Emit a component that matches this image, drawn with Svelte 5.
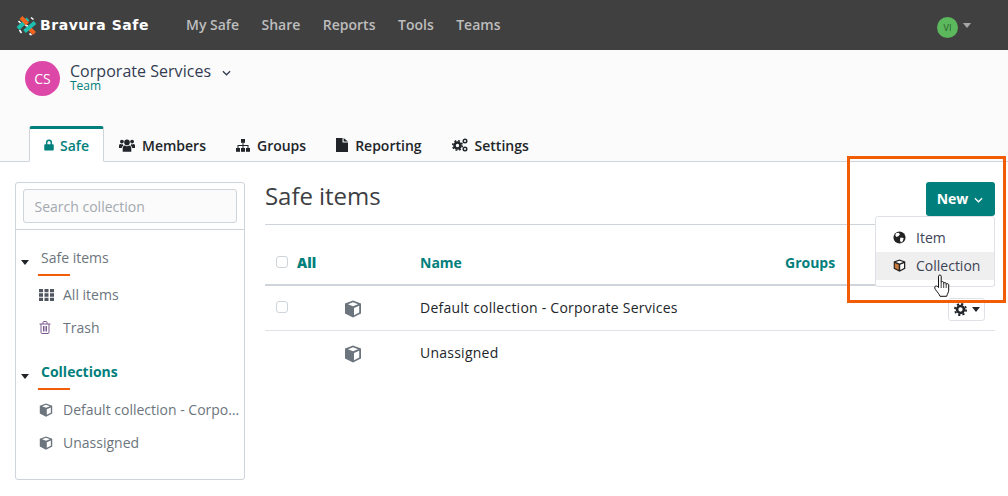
<script>
  const navItems = ['My Safe', 'Share', 'Reports', 'Tools', 'Teams'];
</script>

{#snippet cube(cls)}
  <svg class={cls} viewBox="0 0 18 18" aria-hidden="true">
    <path fill="currentColor" d="M9 .6 17 3.6V13.600L9 17.600 1 13.600V3.600Z"/>
    <path fill="#fff" d="M9 2.300 14 4.200 9 6.200 4 4.200ZM10 7.900 15.200 5.800V12.600L10 15.200Z"/>
  </svg>
{/snippet}

{#snippet caret(cls)}
  <svg class={cls} viewBox="0 0 10 6" aria-hidden="true"><path fill="currentColor" d="M0 0H10L5 6Z"/></svg>
{/snippet}

{#snippet chevron(cls)}
  <svg class={cls} viewBox="0 0 10 6" aria-hidden="true"><path fill="none" stroke="currentColor" stroke-width="1.400" d="M1 1 5 5 9 1"/></svg>
{/snippet}

<div class="page">
  <header class="nav">
    <div class="brand">
      <svg class="logo" viewBox="0 0 21 21" aria-hidden="true">
        <g fill="none" stroke="#fff" stroke-width="1.600">
          <path d="M2.500 6 4.500 8M15 2.500 17.500 4.500M3.500 15 5.500 18M13.500 18.500 15.500 20M9 9.500 12 11.500"/>
        </g>
        <g fill="none" stroke-width="4">
          <path stroke="#1fbfb0" d="M2 13.500 12 4"/>
          <path stroke="#f2641e" d="M5 2.500 11.500 9"/>
          <path stroke="#f2641e" d="M12 12 18.500 18.500"/>
          <path stroke="#1fbfb0" d="M8.500 16.500 19 7.500"/>
        </g>
      </svg>
      <span class="brand-name">Bravura Safe</span>
    </div>
    <nav class="nav-links">
      {#each navItems as item}<a href="#top">{item}</a>{/each}
    </nav>
    <div class="user">
      <span class="avatar">VI</span>
      {@render caret('user-caret')}
    </div>
  </header>

  <section class="subhead">
    <div class="org">
      <span class="org-badge">CS</span>
      <div class="org-text">
        <div class="org-name">Corporate Services {@render chevron('org-chev')}</div>
        <div class="org-type">Team</div>
      </div>
    </div>
    <div class="tabs">
      <a class="tab active" href="#top">
        <svg class="ti lock" viewBox="0 0 12 14"><path fill="currentColor" d="M2.300 6V4.200a3.700 3.700 0 0 1 7.400 0V6h.8c.8 0 1.200.5 1.200 1.200v5.300c0 .8-.5 1.200-1.200 1.200h-9C.7 13.700.3 13.200.3 12.500V7.200C.3 6.500.7 6 1.500 6ZM4.100 6h3.800V4.200a1.900 1.900 0 0 0-3.800 0Z"/></svg>
        Safe
      </a>
      <a class="tab" href="#top">
        <svg class="ti users" viewBox="0 0 16 13"><g fill="currentColor"><circle cx="8" cy="3.400" r="2.800"/><circle cx="2.900" cy="2.600" r="1.900"/><circle cx="13.100" cy="2.600" r="1.900"/><path d="M3.700 12.800V9.300C3.700 7.500 4.800 6.500 6 6.500c.6.500 1.200.8 2 .8s1.400-.3 2-.8c1.200 0 2.300 1 2.300 2.800v3.500ZM0 9V6.600c0-1 .7-1.700 1.500-1.700.4.300.9.500 1.500.500.400 0 .700 0 1-.1-.1.500.1 1 .5 1.300-1 .6-1.600 1.400-1.700 2.400ZM16 9V6.600c0-1-.7-1.700-1.500-1.700-.4.300-.9.500-1.500.500-.4 0-.7 0-1-.1.100.5-.1 1-.5 1.300 1 .6 1.600 1.400 1.700 2.400Z"/></g></svg>
        Members
      </a>
      <a class="tab" href="#top">
        <svg class="ti sitemap" viewBox="0 0 14 13"><g fill="currentColor"><rect x="5" y="0" width="4" height="3.800"/><rect x="0" y="9" width="4" height="3.800"/><rect x="5" y="9" width="4" height="3.800"/><rect x="10" y="9" width="4" height="3.800"/><path d="M6.500 3.500h1V6H12.500V9h-1V7H7.500V9h-1V7H2.500V9h-1V6H6.500Z"/></g></svg>
        Groups
      </a>
      <a class="tab" href="#top">
        <svg class="ti file" viewBox="0 0 11 14" preserveAspectRatio="none"><path fill="currentColor" d="M0 0H6V4.500H11V14H0ZM7 0 11 3.500H7Z"/></svg>
        Reporting
      </a>
      <a class="tab" href="#top">
        <svg class="ti cogs" viewBox="0 0 16 14"><g fill="none" stroke="currentColor"><circle cx="5.500" cy="7.500" r="3" stroke-width="2.600"/><circle cx="5.500" cy="7.500" r="4.800" stroke-width="1.600" stroke-dasharray="1.880 1.890"/><circle cx="13" cy="3" r="1.800" stroke-width="1.400"/><circle cx="13" cy="11" r="1.800" stroke-width="1.400"/></g></svg>
        Settings
      </a>
    </div>
  </section>

  <main class="content">
    <aside class="side">
      <div class="search-wrap">
        <input class="search" placeholder="Search collection" />
      </div>
      <div class="tree">
        <div class="tree-head">
          {@render caret('tree-caret')}
          <span class="tree-title">Safe items</span>
        </div>
        <a class="tree-item" href="#top">
          <svg class="tree-ic" viewBox="0 0 15 12"><path fill="currentColor" d="M0 0h4v3.300H0ZM5.500 0h4v3.300h-4ZM11 0h4v3.300h-4ZM0 4.350h4v3.300H0ZM5.500 4.350h4v3.300h-4ZM11 4.350h4v3.300h-4ZM0 8.700h4V12H0ZM5.500 8.700h4V12h-4ZM11 8.700h4V12h-4Z"/></svg>
          All items
        </a>
        <a class="tree-item" href="#top">
          <svg class="tree-ic trash" viewBox="0 0 12 13"><path fill="none" stroke="currentColor" stroke-width="1" d="M.5 3h11M2 3V11.500c0 .6.300 1 1 1H9c.7 0 1-.4 1-1V3M4 3V1.500c0-.6.300-1 1-1H7c.7 0 1 .4 1 1V3M4.500 5v5.500M6 5v5.500M7.500 5v5.500"/></svg>
          Trash
        </a>
        <div class="tree-head second">
          {@render caret('tree-caret')}
          <span class="tree-title current">Collections</span>
        </div>
        <a class="tree-item" href="#top">
          {@render cube('tree-cube')}
          <span class="ellipsis">Default collection - Corporate Services</span>
        </a>
        <a class="tree-item" href="#top">
          {@render cube('tree-cube')}
          Unassigned
        </a>
      </div>
    </aside>

    <div class="main">
      <div class="title-row">
        <h1>Safe items</h1>
        <button class="new"><span class="new-label">New</span> {@render chevron('new-chev')}</button>
      </div>
      <div class="table">
        <div class="row head">
          <span class="c-check"><i class="check"></i><b>All</b></span>
          <span class="c-name">Name</span>
          <span class="c-groups">Groups</span>
        </div>
        <div class="row">
          <span class="c-check"><i class="check"></i></span>
          <span class="c-icon">{@render cube('row-cube')}</span>
          <span class="c-name body">Default collection - Corporate Services</span>
          <button class="gear">
            <svg class="gear-ic" viewBox="0 0 14 14"><circle cx="7" cy="7" r="3.700" fill="none" stroke="currentColor" stroke-width="2.800"/><circle cx="7" cy="7" r="6" fill="none" stroke="currentColor" stroke-width="2" stroke-dasharray="2.350 2.360"/></svg>
            {@render caret('gear-caret')}
          </button>
        </div>
        <div class="row last">
          <span class="c-check"></span>
          <span class="c-icon">{@render cube('row-cube')}</span>
          <span class="c-name body">Unassigned</span>
        </div>
      </div>
    </div>
  </main>

  <div class="menu">
    <a class="menu-item" href="#top">
      <svg class="menu-ic" viewBox="0 0 14 14"><circle cx="7" cy="7" r="6.500" fill="currentColor"/><path fill="#fff" d="M3 2.500 6 1.800 7.500 3.500 6 5.500 4 6.500 2.500 5ZM8 7l3.500.5-1 3.500-2 1.500-1-2.500Z"/></svg>
      Item
    </a>
    <a class="menu-item hover" href="#top">
      <svg class="menu-ic" viewBox="0 0 18 18"><path fill="#222" d="M9 .6 17 3.600V13.600L9 17.600 1 13.600V3.600Z"/><path fill="#fff" d="M9 2.300 14 4.200 9 6.200 4 4.200ZM10 7.900 15.200 5.800V12.600L10 15.200Z"/><path fill="#c9793a" d="M2.500 5.500 8 7.800V15.300L2.500 12.600Z"/></svg>
      Collection
    </a>
  </div>

  <svg class="hand" viewBox="0 0 17 24" aria-hidden="true">
    <path fill="#fff" stroke="#111" stroke-width="1" stroke-linejoin="round" d="M4.500 13V2.200C4.500.6 7.200.6 7.200 2.200V8.500c0-1.300 2.500-1.300 2.500.2v.8c0-1.300 2.500-1.300 2.500.2v.8c0-1.200 2.500-1.200 2.500.4v5.200c0 2.500-1.500 3.400-2 6.200H6C5.300 20 3.500 18.500 1.400 15.500.2 13.700.7 12 2 12c1 0 1.800 .6 2.500 1.500Z"/>
    <path fill="none" stroke="#111" stroke-width=".8" d="M7.200 9V14M9.700 9.500V14M12.200 10.500V14"/>
  </svg>

  <div class="highlight"></div>
</div>

<style>
  :global(body) {
    margin: 0;
    background: #fff;
  }
  .page {
    position: relative;
    width: 1008px;
    height: 496px;
    overflow: hidden;
    font-family: "Open Sans", sans-serif;
    font-size: 14px;
    color: #212529;
  }
  a {
    color: inherit;
    text-decoration: none;
  }

  .nav {
    height: 50px;
    background: #404040;
    display: flex;
    align-items: center;
    padding-left: 15px;
    box-sizing: border-box;
  }
  .brand {
    display: flex;
    align-items: center;
    width: 171px;
  }
  .logo {
    width: 21px;
    height: 21px;
    margin-left: 1px;
    flex: none;
  }
  .brand-name {
    font-family: "DejaVu Sans", sans-serif;
    font-weight: 700;
    font-size: 14px;
    color: #fff;
    margin-left: 3px;
    letter-spacing: 0.55px;
    white-space: nowrap;
  }
  .nav-links {
    display: flex;
    gap: 22.500px;
    font-weight: 600;
    font-size: 14px;
    color: #bdbdbd;
    margin-top: -2px;
  }
  .user {
    margin-left: auto;
    margin-right: 36px;
    margin-top: 4px;
    display: flex;
    align-items: center;
    gap: 4px;
  }
  .avatar {
    width: 21px;
    height: 21px;
    border-radius: 50%;
    background: #5cb85c;
    color: #2c5e2c;
    font-size: 9px;
    display: flex;
    align-items: center;
    justify-content: center;
  }
  .user-caret {
    width: 10px;
    height: 5px;
    margin-top: -4px;
    color: #a5a5a5;
  }

  .subhead {
    height: 112px;
    background: #fbfbfb;
    border-bottom: 1px solid #ced4da;
    box-sizing: border-box;
    display: flex;
    flex-direction: column;
    justify-content: space-between;
    padding: 11px 0 0 25px;
  }
  .org {
    display: flex;
    gap: 10px;
  }
  .org-badge {
    width: 35px;
    height: 35px;
    border-radius: 50%;
    background: #dc47a8;
    color: #fff;
    font-size: 14px;
    display: flex;
    align-items: center;
    justify-content: center;
    flex: none;
  }
  .org-name {
    font-size: 16px;
    line-height: 20px;
    letter-spacing: 0.03px;
    color: #333c52;
  }
  .org-chev {
    width: 9px;
    height: 6px;
    margin-left: 7px;
    vertical-align: 1px;
  }
  .org-type {
    font-size: 12px;
    line-height: 12px;
    margin-top: -1px;
    color: #017f7c;
  }
  .tabs {
    display: flex;
    margin-left: 4px;
    margin-bottom: -1px;
    align-items: flex-end;
  }
  .tab {
    display: flex;
    align-items: center;
    height: 34px;
    box-sizing: border-box;
    padding: 0 15px;
    font-weight: 600;
    font-size: 14px;
    color: #212529;
    gap: 7px;
  }
  .tab.active {
    height: 36px;
    width: 75px;
    color: #017f7c;
    background: #fff;
    border: 1px solid #ced4da;
    border-top: 3px solid #017f7c;
    border-bottom: 1px solid #fff;
    border-radius: 3px 3px 0 0;
    padding: 0 0 0 14px;
    gap: 6px;
  }
  .ti { flex: none; }
  .lock { width: 10px; height: 12px; }
  .users { width: 16px; height: 13px; }
  .sitemap { width: 14px; height: 13px; }
  .file { width: 12px; height: 14px; }
  .cogs { width: 16px; height: 14px; }

  .content {
    display: flex;
    padding: 20px 13px 0 15px;
    gap: 20px;
  }
  .side {
    width: 230px;
    height: 298px;
    box-sizing: border-box;
    border: 1px solid #ced4da;
    border-radius: 3px;
    flex: none;
  }
  .search-wrap {
    padding: 6px 7px;
    border-bottom: 1px solid #ced4da;
  }
  .search {
    display: block;
    width: 100%;
    height: 34px;
    box-sizing: border-box;
    background: #fbfbfb;
    border: 1px solid #ced4da;
    border-radius: 3px;
    padding: 0 10.500px;
    font: 14px "Open Sans", sans-serif;
    outline: none;
  }
  .search::placeholder {
    color: #a4a9b0;
    opacity: 1;
  }
  .tree {
    padding-top: 18px;
    color: #6c757d;
  }
  .tree-head {
    position: relative;
    height: 28px;
    padding-left: 22px;
    display: flex;
    align-items: flex-start;
    margin-bottom: 2px;
  }
  .tree-head.second {
    margin-top: 18px;
    margin-bottom: 3px;
  }
  .tree-caret {
    position: absolute;
    left: 5px;
    top: 12px;
    width: 8px;
    height: 5px;
    color: #212529;
  }
  .tree-title {
    display: block;
    line-height: 20px;
    padding-left: 3px;
    width: 29px;
    height: 26px;
    border-bottom: 2px solid #f25c05;
    white-space: nowrap;
    box-sizing: content-box;
  }
  .tree-title.current {
    font-weight: 700;
    color: #017f7c;
  }
  .tree-item {
    display: flex;
    align-items: center;
    height: 33px;
    padding-left: 23px;
    gap: 9px;
    white-space: nowrap;
    color: #6c757d;
  }
  .tree-ic {
    width: 15px;
    height: 12px;
    color: #4f5660;
    flex: none;
  }
  .tree-ic.trash {
    color: #7d5a8c;
    height: 13px;
    width: 12px;
    margin: 0 3px 0 0;
  }
  .tree-cube {
    width: 14px;
    height: 14px;
    color: #6c757d;
    flex: none;
    margin-right: 1px;
  }
  .ellipsis {
    overflow: hidden;
    text-overflow: ellipsis;
    min-width: 0;
    margin-right: 4px;
  }

  .main {
    flex: 1;
    min-width: 0;
  }
  .title-row {
    height: 42px;
    display: flex;
    justify-content: space-between;
    align-items: flex-start;
    border-bottom: 1px solid #ced4da;
  }
  h1 {
    margin: -1px 0 0;
    font-size: 24px;
    font-weight: 400;
    line-height: 30px;
    letter-spacing: -0.05px;
    color: #3c4043;
  }
  .new {
    width: 69px;
    height: 34px;
    border: none;
    border-radius: 3px;
    background: #017f7c;
    color: #fff;
    font: 700 14px "Open Sans", sans-serif;
    display: flex;
    align-items: center;
    justify-content: center;
    gap: 6px;
    padding: 0 1px 2px 0;
  }
  .new-label {
    display: block;
  }
  .new-chev {
    width: 9px;
    height: 6px;
    margin-top: 3px;
  }
  .row {
    position: relative;
    display: flex;
    align-items: center;
    height: 45px;
    padding-bottom: 2px;
    border-bottom: 1px solid #dee2e6;
    box-sizing: border-box;
  }
  .row.head {
    height: 61px;
    border-bottom: 2px solid #ced4da;
    font-weight: 700;
    color: #017f7c;
    padding: 15px 0 0;
    box-sizing: border-box;
  }
  .row.last {
    border-bottom: none;
  }
  .c-check {
    width: 79px;
    padding-left: 11px;
    display: flex;
    align-items: center;
    gap: 9px;
    box-sizing: border-box;
    flex: none;
  }
  .check {
    width: 12px;
    height: 12px;
    box-sizing: border-box;
    border: 1px solid #ced4da;
    border-radius: 3px;
    background: #fff;
    display: block;
  }
  .c-icon {
    width: 76px;
    flex: none;
    display: flex;
  }
  .head .c-name {
    margin-left: 76px;
    width: 365px;
  }
  .body {
    font-weight: 500;
    letter-spacing: 0.24px;
    color: #212529;
  }
  .row-cube {
    width: 18px;
    height: 18px;
    margin-top: 3px;
    color: #6c757d;
    display: block;
  }
  .gear {
    position: absolute;
    right: 10px;
    top: 12px;
    width: 37px;
    height: 23px;
    box-sizing: border-box;
    background: #fff;
    border: 1px solid #dee2e6;
    border-radius: 3px;
    display: flex;
    align-items: center;
    justify-content: center;
    gap: 5px;
    padding: 0;
    color: #212529;
  }
  .gear-ic {
    width: 13px;
    height: 13px;
  }
  .gear-caret {
    width: 8px;
    height: 5px;
  }

  .menu {
    position: absolute;
    left: 875px;
    top: 216px;
    width: 120px;
    height: 71px;
    box-sizing: border-box;
    padding: 7px 0;
    background: #fff;
    border: 1px solid #dee2e6;
    border-radius: 3px;
  }
  .menu-item {
    display: flex;
    align-items: center;
    height: 28px;
    box-sizing: border-box;
    padding: 0 0 2px 17px;
    gap: 10px;
    color: #3c4356;
  }
  .menu-item.hover {
    background: #efefef;
  }
  .menu-ic {
    width: 13px;
    height: 13px;
    color: #222;
    flex: none;
  }
  .hand {
    position: absolute;
    left: 934px;
    top: 274px;
    width: 17px;
    height: 24px;
  }
  .highlight {
    position: absolute;
    left: 847px;
    top: 156px;
    width: 159px;
    height: 147px;
    box-sizing: border-box;
    border: 3px solid #f25c05;
  }
</style>
